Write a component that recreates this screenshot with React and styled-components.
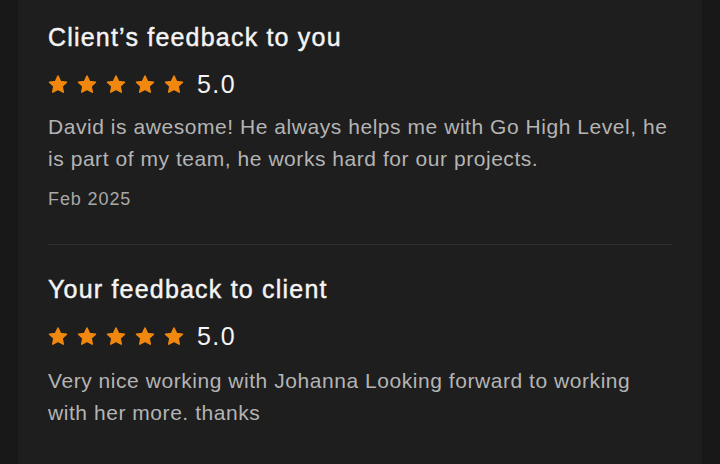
import React from "react";
import styled, { createGlobalStyle } from "styled-components";

const Global = createGlobalStyle`
  html, body { margin: 0; padding: 0; background: #181818; }
  body { font-family: "Liberation Sans", Arial, sans-serif; -webkit-font-smoothing: antialiased; }
`;

const Page = styled.div`
  display: flex;
  height: 464px;
  padding: 0 18px;
  box-sizing: border-box;
  background: #181818;
  overflow: hidden;
`;

const Panel = styled.div`
  flex: 1;
  background: #1e1e1e;
  padding: 22px 30px 0 30px;
  display: flex;
  flex-direction: column;
`;

const Section = styled.section`
  display: flex;
  flex-direction: column;
`;

const Title = styled.h3`
  margin: 0;
  font-size: 25px;
  line-height: 30px;
  font-weight: 400;
  letter-spacing: 1.2px;
  color: #f4f4f4;
  -webkit-text-stroke: 0.45px #f4f4f4;
`;

const RatingRow = styled.div`
  display: flex;
  align-items: center;
  height: 24px;
  margin-top: 20px;
`;

const Stars = styled.div`
  display: flex;
  gap: 9px;
`;

const Score = styled.span`
  margin-left: 13px;
  font-size: 25px;
  line-height: 24px;
  letter-spacing: 1.4px;
  color: #f4f4f4;
  font-weight: 400;
`;

const Body = styled.p`
  margin: ${(p) => p.$top}px 0 0;
  font-size: 21px;
  line-height: 32px;
  letter-spacing: 0.55px;
  color: #b4b4b4;
`;

const DateText = styled.div`
  margin-top: 12px;
  font-size: 18px;
  line-height: 24px;
  letter-spacing: 0.9px;
  color: #a8a8a8;
`;

const Divider = styled.hr`
  border: 0;
  height: 1px;
  background: #2e2e2e;
  margin: 33px 0 29px;
`;

const Star = () => (
  <svg width="20" height="19" viewBox="0 0 24 23" aria-hidden="true">
    <path
      d="M12 1.2l3.1 6.6 7.2.9-5.3 5 1.4 7.1L12 17.3l-6.4 3.5L7 13.7 1.7 8.7l7.2-.9z"
      fill="#f0870f"
      stroke="#f0870f"
      strokeWidth="1.8"
      strokeLinejoin="round"
    />
  </svg>
);

const Rating = ({ value }) => (
  <RatingRow>
    <Stars>
      {[0, 1, 2, 3, 4].map((i) => (
        <Star key={i} />
      ))}
    </Stars>
    <Score>{value}</Score>
  </RatingRow>
);

export default function App() {
  return (
    <>
      <Global />
      <Page>
        <Panel>
          <Section>
            <Title>Client’s feedback to you</Title>
            <Rating value="5.0" />
            <Body $top={15}>
              David is awesome! He always helps me with Go High Level, he is part of my team, he works hard for our projects.
            </Body>
            <DateText>Feb 2025</DateText>
          </Section>
          <Divider />
          <Section>
            <Title>Your feedback to client</Title>
            <Rating value="5.0" />
            <Body $top={17}>
              Very nice working with Johanna Looking forward to working with her more. thanks
            </Body>
          </Section>
        </Panel>
      </Page>
    </>
  );
}
